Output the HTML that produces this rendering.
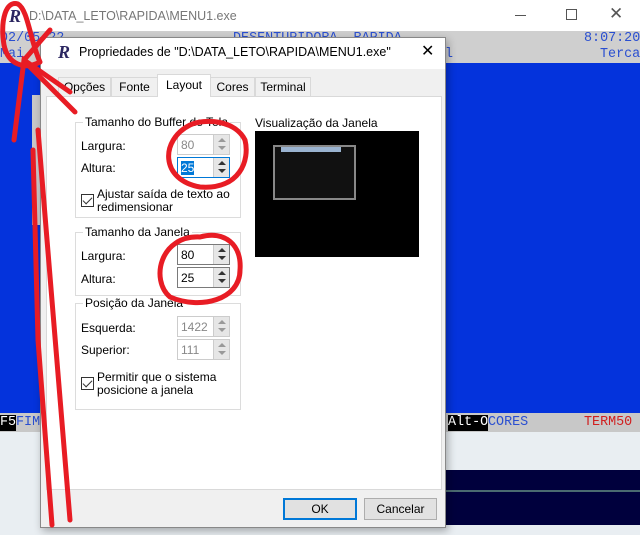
<!DOCTYPE html>
<html><head><meta charset="utf-8"><style>
*{margin:0;padding:0;box-sizing:border-box}
body{width:640px;height:535px;overflow:hidden;position:relative;background:#e9eef2;font-family:"Liberation Sans",sans-serif;font-size:12px;color:#000}
.a{position:absolute}
.mono{font-family:"Liberation Mono",monospace;font-size:13.4px;white-space:pre;line-height:16px}
.spin{position:absolute;width:53px;height:21px;border:1px solid #7a7a7a;background:#fff}
.spin .v{position:absolute;left:3px;top:3px;font-size:12px}
.spin .b{position:absolute;right:0;top:0;width:16px;height:19px;background:#e6e6e6;border-left:1px solid #ccc}
.spin .b:before{content:"";position:absolute;left:4px;top:3px;border:4px solid transparent;border-bottom:4px solid #333;border-top:0}
.spin .b:after{content:"";position:absolute;left:4px;top:11px;border:4px solid transparent;border-top:4px solid #333;border-bottom:0}
.dis{border-color:#ccc}.dis .v{color:#888}.dis .b:before{border-bottom-color:#999}.dis .b:after{border-top-color:#999}
.grp{position:absolute;border:1px solid #dcdcdc}
.grp .t{position:absolute;left:7px;top:-8px;background:#fff;padding:0 2px}
.cb{position:absolute;width:13px;height:13px;border:1px solid #333;background:#fff}
.cb:after{content:"";position:absolute;left:3px;top:0px;width:4px;height:8px;border:solid #333;border-width:0 1.5px 1.5px 0;transform:rotate(45deg)}
.tab{position:absolute;top:77px;height:19px;border:1px solid #d9d9d9;border-bottom:0;background:#f0f0f0;text-align:center;line-height:18px}
.bl{color:#2a4fd0}
</style></head><body>
<div class="a" style="left:0;top:0;width:640px;height:31px;background:#fff"></div>
<div class="a" style="left:9px;top:6px;font:italic bold 18px 'Liberation Serif',serif;color:#2a2560">R</div>
<div class="a" style="left:29px;top:9px;color:#777;font-size:12.5px">D:\DATA_LETO\RAPIDA\MENU1.exe</div>
<div class="a" style="left:515px;top:15px;width:11px;height:1px;background:#555"></div>
<div class="a" style="left:566px;top:9px;width:11px;height:11px;border:1px solid #555"></div>
<div class="a" style="left:609px;top:4px;font-size:17px;color:#555">✕</div>
<div class="a" style="left:0;top:31px;width:640px;height:32px;background:#cfcfcf"></div>
<div class="a mono bl" style="left:0;top:31px">02/05/22</div>
<div class="a mono bl" style="left:233px;top:31px">DESENTUPIDORA  RAPIDA</div>
<div class="a mono bl" style="left:584px;top:31px">8:07:20</div>
<div class="a mono bl" style="left:0;top:47px">Mai</div>
<div class="a mono bl" style="left:437px;top:47px">al</div>
<div class="a mono bl" style="left:600px;top:47px">Terca</div>
<div class="a" style="left:0;top:63px;width:640px;height:350px;background:#0433dc"></div>
<div class="a" style="left:32px;top:95px;width:18px;height:130px;background:#c8c8c8"></div>
<div class="a" style="left:0;top:413px;width:640px;height:19px;background:#c8c8c8"></div>
<div class="a mono" style="left:0;top:415px;background:#000;color:#fff">F5</div>
<div class="a mono bl" style="left:16px;top:415px">FIM</div>
<div class="a mono" style="left:448px;top:415px;background:#000;color:#fff">Alt-O</div>
<div class="a mono bl" style="left:488px;top:415px">CORES</div>
<div class="a mono" style="left:584px;top:415px;color:#d02020">TERM50</div>
<div class="a" style="left:440px;top:470px;width:200px;height:55px;background:#00003d"></div>
<div class="a" style="left:440px;top:490px;width:200px;height:2px;background:#4a6a70"></div>
<div class="a" style="left:40px;top:37px;width:406px;height:491px;background:#f0f0f0;border:1px solid #888;box-shadow:2px 3px 8px rgba(0,0,0,.3)"></div>
<div class="a" style="left:41px;top:38px;width:404px;height:31px;background:#fff"></div>
<div class="a" style="left:58px;top:42px;font:italic bold 18px 'Liberation Serif',serif;color:#2a2560">R</div>
<div class="a" style="left:79px;top:45px;font-size:12.5px">Propriedades de "D:\DATA_LETO\RAPIDA\MENU1.exe"</div>
<div class="a" style="left:421px;top:41px;font-size:16px">✕</div>
<div class="tab" style="left:58px;width:53px">Opções</div>
<div class="tab" style="left:111px;width:47px">Fonte</div>
<div class="tab" style="left:210px;width:45px">Cores</div>
<div class="tab" style="left:255px;width:56px">Terminal</div>
<div class="a" style="left:46px;top:96px;width:396px;height:394px;background:#fff;border:1px solid #d9d9d9"></div>
<div class="tab" style="left:157px;top:74px;width:54px;height:23px;background:#fff;line-height:20px">Layout</div>
<div class="grp" style="left:75px;top:122px;width:166px;height:96px"><span class="t">Tamanho do Buffer de Tela</span></div>
<div class="a" style="left:81px;top:139px">Largura:</div>
<div class="spin dis" style="left:177px;top:134px"><span class="v">80</span><span class="b"></span></div>
<div class="a" style="left:81px;top:161px">Altura:</div>
<div class="spin" style="left:177px;top:157px;border-color:#0078d7"><span class="v" style="background:#0078d7;color:#fff">25</span><span class="b"></span></div>
<div class="cb" style="left:81px;top:194px"></div>
<div class="a" style="left:97px;top:188px;line-height:13px">Ajustar saída de texto ao<br>redimensionar</div>
<div class="grp" style="left:75px;top:232px;width:166px;height:64px"><span class="t">Tamanho da Janela</span></div>
<div class="a" style="left:81px;top:249px">Largura:</div>
<div class="spin" style="left:177px;top:244px"><span class="v">80</span><span class="b"></span></div>
<div class="a" style="left:81px;top:272px">Altura:</div>
<div class="spin" style="left:177px;top:267px"><span class="v">25</span><span class="b"></span></div>
<div class="grp" style="left:75px;top:303px;width:166px;height:107px"><span class="t">Posição da Janela</span></div>
<div class="a" style="left:81px;top:321px">Esquerda:</div>
<div class="spin dis" style="left:177px;top:316px"><span class="v">1422</span><span class="b"></span></div>
<div class="a" style="left:81px;top:343px">Superior:</div>
<div class="spin dis" style="left:177px;top:339px"><span class="v">111</span><span class="b"></span></div>
<div class="cb" style="left:81px;top:377px"></div>
<div class="a" style="left:97px;top:371px;line-height:13px">Permitir que o sistema<br>posicione a janela</div>
<div class="a" style="left:255px;top:116px">Visualização da Janela</div>
<div class="a" style="left:255px;top:131px;width:164px;height:126px;background:#000"></div>
<div class="a" style="left:273px;top:145px;width:83px;height:55px;background:#111;border:2px solid #888"></div>
<div class="a" style="left:281px;top:147px;width:60px;height:5px;background:#9ab3d0"></div>
<div class="a" style="left:283px;top:498px;width:74px;height:22px;border:2px solid #0078d7;background:#e1e1e1;text-align:center;line-height:18px">OK</div>
<div class="a" style="left:364px;top:498px;width:73px;height:22px;border:1px solid #adadad;background:#e1e1e1;text-align:center;line-height:20px">Cancelar</div>
<svg class="a" style="left:0;top:0" width="640" height="535" fill="none" stroke="#e81c24" stroke-width="5" stroke-linecap="round">
<path d="M40 62 C30 40 28 10 18 4 C6 0 0 20 4 45 C8 65 25 70 40 62"/>
<path d="M14 140 L24 60 L70 92"/>
<path d="M24 60 L50 30"/>
<path d="M52 525 L38 340 L33 150"/>
<path d="M38 130 L70 520"/>
<path d="M25 62 L75 112"/>
<path d="M190 125 C160 140 160 180 200 187 C240 190 250 160 245 140 C235 120 205 118 190 125"/>
<path d="M200 237 C160 235 150 280 170 297 C200 310 240 300 240 270 C242 245 225 230 200 237"/>
</svg>
</body></html>
